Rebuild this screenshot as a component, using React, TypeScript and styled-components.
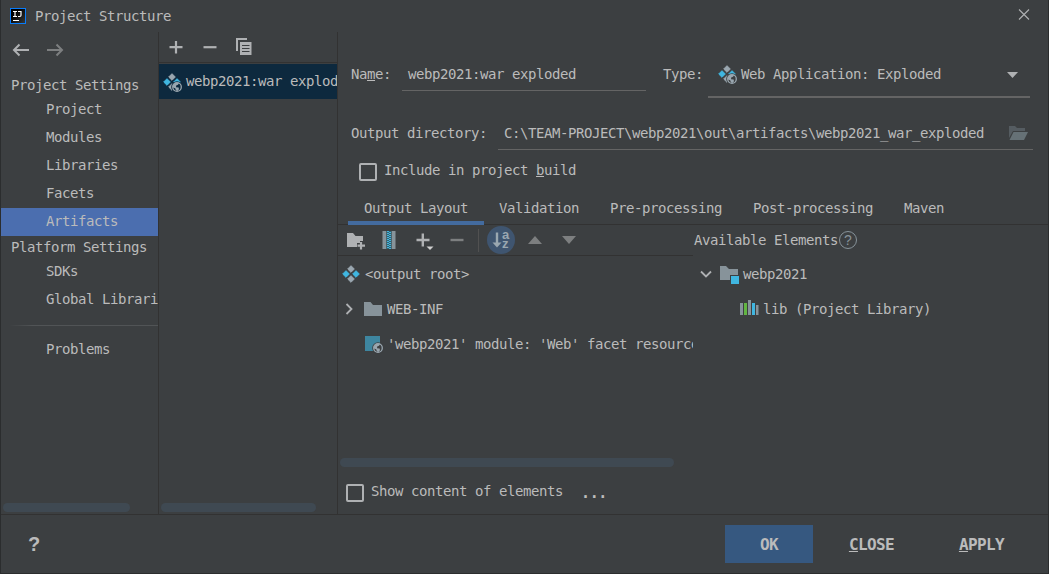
import React from "react";
import styled, { createGlobalStyle } from "styled-components";

const c = {
  bg: "#3c3f41",
  line: "#323232",
  text: "#bbbbbb",
  icon: "#afb1b3",
  dim: "#7d7f80",
  steel: "#87939a",
  grey: "#9aa7b0",
  blue: "#40b6e0",
  thumb: "#3f4952",
  select: "#0d293e",
  accent: "#4b6eaf",
};

const Global = createGlobalStyle`
  * { box-sizing: border-box; }
  body {
    margin: 0;
    background: ${c.bg};
    color: ${c.text};
    font-family: "DejaVu Sans Mono", "Liberation Mono", monospace;
    font-size: 14px;
    letter-spacing: -0.428px;
    white-space: pre;
    overflow: hidden;
  }
  svg { display: block; flex: none; }
`;

const Window = styled.div`
  width: 1049px;
  height: 574px;
  display: flex;
  flex-direction: column;
  border: solid #2b2d2e;
  border-width: 0 1px 1px 1px;
`;

const TitleBar = styled.header`
  height: 32px;
  display: flex;
  align-items: center;
  padding: 0 18px 0 9px;
  line-height: 32px;
  svg + span { margin-left: 8px; flex: 1; }
`;

const Body = styled.div`
  flex: 1;
  min-height: 0;
  display: flex;
  border-bottom: 1px solid ${c.line};
`;

const Sidebar = styled.nav`
  width: 158px;
  flex: none;
  display: flex;
  flex-direction: column;
  border-right: 1px solid ${c.line};
  overflow: hidden;
`;

const NavArrows = styled.div`
  height: 42px;
  display: flex;
  gap: 15px;
  padding: 8px 0 0 9px;
`;

const Section = styled.div`
  height: 22px;
  line-height: 23px;
  padding-left: 10px;
`;

const NavItem = styled.div<{ $active?: boolean }>`
  height: 28px;
  line-height: 27px;
  padding-left: 45px;
  background: ${(p) => (p.$active ? c.accent : "transparent")};
`;

const Divider = styled.div`
  height: 1px;
  margin: 11px 0 10px 8px;
  background: linear-gradient(to right, ${c.bg}, #515456 24px);
`;

const Thumb = styled.div<{ $w: number }>`
  width: ${(p) => p.$w}px;
  height: 9px;
  margin: auto 0 2px 2px;
  border-radius: 5px;
  background: ${c.thumb};
`;

const ArtifactList = styled.section`
  width: 179px;
  flex: none;
  display: flex;
  flex-direction: column;
  border-right: 1px solid ${c.line};
  overflow: hidden;
`;

const ListToolbar = styled.div`
  height: 31px;
  display: flex;
  gap: 14px;
  padding: 5px 0 0 7px;
  border-bottom: 1px solid ${c.line};
`;

const ListItem = styled.div`
  height: 35px;
  margin-top: 1px;
  display: flex;
  align-items: center;
  gap: 4px;
  padding-left: 3px;
  background: ${c.select};
  line-height: 33px;
`;

const Main = styled.main`
  flex: 1;
  min-width: 0;
  display: flex;
  flex-direction: column;
`;

const FormRow = styled.div<{ $top: number }>`
  display: flex;
  margin-top: ${(p) => p.$top}px;
  padding-left: 13px;
  line-height: 32px;
`;

const Label = styled.label<{ $w: number; $pad?: number }>`
  width: ${(p) => p.$w}px;
  padding-left: ${(p) => p.$pad ?? 0}px;
  flex: none;
`;

const Field = styled.div<{ $w: number }>`
  width: ${(p) => p.$w}px;
  height: 33px;
  display: flex;
  align-items: center;
  justify-content: space-between;
  padding: 0 5px 0 6px;
  border-bottom: 1px solid #646464;
`;

const Select = styled.div`
  width: 322px;
  height: 40px;
  display: flex;
  padding: 0 11px 0 9px;
  border-bottom: 2px solid #646464;
  svg { margin-top: 6px; }
  span { flex: 1; margin-left: 4px; }
`;

const CheckRow = styled.div<{ $pad: string }>`
  display: flex;
  padding: ${(p) => p.$pad};
  line-height: 19px;
`;

const Box = styled.span`
  width: 18px;
  height: 18px;
  margin: 2px 7px 0 0;
  border: 2px solid ${c.icon};
  border-radius: 2px;
`;

const Mnemonic = styled.span`
  text-decoration: underline;
  text-decoration-thickness: 1px;
  text-underline-offset: 1px;
  text-decoration-skip-ink: none;
`;

const Tabs = styled.div`
  height: 34px;
  margin-top: 10px;
  display: flex;
  padding-left: 10px;
  border-bottom: 1px solid ${c.line};
`;

const Tab = styled.div<{ $active?: boolean }>`
  height: 34px;
  line-height: 34px;
  padding: 0 ${(p) => (p.$active ? 16 : 15)}px 0 16px;
  margin-right: ${(p) => (p.$active ? -1 : 0)}px;
  box-shadow: ${(p) => (p.$active ? "inset 0 -4px 0 #436b9f" : "none")};
`;

const Split = styled.div`
  flex: 1;
  min-height: 0;
  display: flex;
`;

const Pane = styled.div`
  width: 355px;
  display: flex;
  flex-direction: column;
  overflow: hidden;
`;

const LayoutToolbar = styled.div`
  height: 31px;
  display: flex;
  align-items: center;
  gap: 14px;
  padding-left: 8px;
  border-bottom: 1px solid ${c.line};
`;

const ToolSeparator = styled.span`
  width: 1px;
  height: 23px;
  margin: 0 -6px 0 -4px;
  background: #515151;
`;

const SortToggle = styled.span`
  width: 28px;
  height: 28px;
  margin-right: -4px;
  display: grid;
  grid-template-columns: 10px 8px;
  align-items: center;
  justify-content: center;
  border-radius: 50%;
  background: #3f5570;
  color: ${c.grey};
  font: bold 13px/9px "Liberation Sans", sans-serif;
  letter-spacing: 0;
  white-space: normal;
  span { margin-top: -3px; }
`;

const PaneHeader = styled.div`
  height: 31px;
  display: flex;
  align-items: center;
  padding: 0 0 1px 1px;
`;

const HelpBadge = styled.span`
  width: 18px;
  height: 18px;
  margin-left: 1px;
  border: 1.5px solid ${c.steel};
  border-radius: 50%;
  color: ${c.steel};
  font: 14px/16px "Liberation Sans", sans-serif;
  letter-spacing: 0;
  text-align: center;
`;

const Tree = styled.div`
  padding-top: 1px;
`;

const TreeRow = styled.div<{ $indent: number; $gap?: number }>`
  height: 35px;
  display: flex;
  align-items: center;
  gap: ${(p) => p.$gap ?? 4}px;
  padding-left: ${(p) => p.$indent}px;
  line-height: 32px;
  svg, span { margin-top: -2px; }
`;

const More = styled.span`
  margin-left: 18px;
  font-weight: bold;
  font-size: 15px;
  line-height: 22px;
`;

const Footer = styled.footer`
  height: 58px;
  display: flex;
  align-items: center;
  padding: 0 15px 0 27px;
`;

const HelpMark = styled.span`
  flex: 1;
  font: bold 20px/30px "Liberation Sans", sans-serif;
`;

const Button = styled.button<{ $w: number; $primary?: boolean }>`
  width: ${(p) => p.$w}px;
  height: 38px;
  padding: 0;
  border: 0;
  background: ${(p) => (p.$primary ? "#365880" : "transparent")};
  color: ${c.text};
  font: bold 16px "DejaVu Sans Mono", monospace;
  letter-spacing: -0.6px;
`;

const Svg = ({ w = 20, h = 20, children }: { w?: number; h?: number; children: React.ReactNode }) => (
  <svg width={w} height={h} viewBox={`0 0 ${w} ${h}`} fill="none">
    {children}
  </svg>
);

const Globe = ({ x, y, bg }: { x: number; y: number; bg: string }) => (
  <g transform={`translate(${x} ${y})`}>
    <circle r="5.8" fill={bg} />
    <circle r="4.3" stroke={c.grey} strokeWidth="1.3" />
    <path d="M-4.4-1.2 -1.8-3.9 2-4 1-2.2-.8-1.4-1 .2 1.600 .4 2 2.200 .2 4.200-1.200 3-1.800 1.200-4 .4Z" fill={c.grey} />
  </g>
);

const Diamonds = () => (
  <g strokeWidth="1" strokeLinejoin="round">
    <path d="M10 1.700l3.300 3.300L10 8.300 6.700 5zM10 11.700l3.300 3.300-3.300 3.300L6.700 15z" fill={c.grey} stroke={c.grey} />
    <path d="M5 6.700l3.300 3.300L5 13.300 1.700 10zM15 6.700l3.300 3.300-3.300 3.300-3.300-3.300z" fill={c.blue} stroke={c.blue} />
  </g>
);

const ArtifactIcon = () => <Svg><Diamonds /></Svg>;
const WarIcon = ({ bg = c.bg }: { bg?: string }) => (
  <Svg><Diamonds /><Globe x={15} y={15} bg={bg} /></Svg>
);

const AppLogo = () => (
  <Svg w={17} h={17}>
    <defs>
      <linearGradient id="logo" x1="0" y1="0" x2="1" y2="1">
        <stop offset="0.3" stopColor="#000" />
        <stop offset="1" stopColor="#3a3a3a" />
      </linearGradient>
    </defs>
    <rect x=".5" y=".5" width="15" height="15" fill="url(#logo)" stroke="#087cfa" />
    <path d="M3 3.500h4M5 3.500v5M3 8.500h4M8 3.500h3v3.800q0 1.200-1.200 1.200H8M3 12.500h6" stroke="#fff" strokeWidth="1.2" />
  </Svg>
);

const BackIcon = ({ flip }: { flip?: boolean }) => (
  <Svg>
    <path
      d={flip ? "M2 10h15M11.5 4.5 17 10l-5.5 5.5" : "M19 10H4M9.5 4.5 4 10l5.5 5.5"}
      stroke={flip ? c.dim : c.icon}
      strokeWidth="2"
    />
  </Svg>
);

const CopyIcon = () => (
  <Svg>
    <path d="M2 1h11v2H4v11H2z" fill={c.icon} />
    <path d="M6 5h11.500v13H6z" fill={c.icon} />
    <path d="M8 8.500h7.500M8 11.500h7.500M8 14.500h7.500" stroke={c.bg} />
  </Svg>
);

const OpenFolderIcon = () => (
  <Svg>
    <path d="M1 3h6l2 2h8v3H5L1 15z" fill="#555c61" />
    <path d="M5.500 9H20l-4 8H1.500z" fill="#667176" />
  </Svg>
);

const FolderIcon = () => (
  <Svg><path d="M1 3h6.500l2.500 3h9v11H1z" fill={c.steel} /></Svg>
);

const ModuleFolderIcon = () => (
  <Svg>
    <path d="M1 2h6l3 3h9v6h-8v5H1z" fill={c.steel} />
    <path d="M12 12h8v8h-8z" fill={c.blue} />
  </Svg>
);

const Chevron = ({ open }: { open?: boolean }) => (
  <Svg w={12} h={20}>
    <path d={open ? "M1 7.500 6 12.500 11 7.500" : "M2.500 5 7.500 10l-5 5"} stroke={c.icon} strokeWidth="1.8" />
  </Svg>
);

export default function App() {
  return (
    <>
      <Global />
      <Window>
        <TitleBar>
          <AppLogo />
          <span>Project Structure</span>
          <Svg w={12} h={16}>
            <path d="M1 1.500 11 11.500M11 1.500 1 11.500" stroke={c.icon} strokeWidth="1.1" />
          </Svg>
        </TitleBar>
        <Body>
          <Sidebar>
            <NavArrows><BackIcon /><BackIcon flip /></NavArrows>
            <Section>Project Settings</Section>
            <NavItem>Project</NavItem>
            <NavItem>Modules</NavItem>
            <NavItem>Libraries</NavItem>
            <NavItem>Facets</NavItem>
            <NavItem $active>Artifacts</NavItem>
            <Section>Platform Settings</Section>
            <NavItem>SDKs</NavItem>
            <NavItem>Global Libraries</NavItem>
            <Divider />
            <NavItem>Problems</NavItem>
            <Thumb $w={127} />
          </Sidebar>
          <ArtifactList>
            <ListToolbar>
              <Svg><path d="M10 4v12.500M3.500 10.200h13" stroke={c.icon} strokeWidth="2.2" /></Svg>
              <Svg><path d="M3.500 10.200h13" stroke={c.icon} strokeWidth="2.2" /></Svg>
              <CopyIcon />
            </ListToolbar>
            <ListItem><WarIcon bg={c.select} /><span>webp2021:war exploded</span></ListItem>
            <Thumb $w={155} />
          </ArtifactList>
          <Main>
            <FormRow $top={26}>
              <Label $w={51}>Na<Mnemonic>m</Mnemonic>e:</Label>
              <Field $w={244}>webp2021:war exploded</Field>
              <Label $w={62} $pad={17}>Type:</Label>
              <Select>
                <WarIcon />
                <span>Web Application: Exploded</span>
                <Svg w={14}><path d="M2 8h11l-5.500 6z" fill={c.icon} /></Svg>
              </Select>
            </FormRow>
            <FormRow $top={19}>
              <Label $w={147}>Output directory:</Label>
              <Field $w={535}>
                <span>C:\TEAM-PROJECT\webp2021\out\artifacts\webp2021_war_exploded</span>
                <OpenFolderIcon />
              </Field>
            </FormRow>
            <CheckRow $pad="11px 0 0 21px">
              <Box />
              <span>Include in project <Mnemonic>b</Mnemonic>uild</span>
            </CheckRow>
            <Tabs>
              <Tab $active>Output Layout</Tab>
              <Tab>Validation</Tab>
              <Tab>Pre-processing</Tab>
              <Tab>Post-processing</Tab>
              <Tab>Maven</Tab>
            </Tabs>
            <Split>
              <Pane>
                <LayoutToolbar>
                  <Svg>
                    <path d="M1 3h6l2.500 3H17v5h-3v2h-3v4H1z" fill={c.icon} />
                    <path d="M15 12v7.500M11.500 15.700h7.500" stroke={c.icon} strokeWidth="2.200" />
                  </Svg>
                  <Svg>
                    <path d="M2.500 1h4v18h-4zM11.500 1h4v18h-4z" fill={c.steel} />
                    <path d="M6.500 1h5v18h-5z" fill="#35606f" />
                    <path d="M8 1v18M10 2v17" stroke={c.blue} strokeWidth="2" strokeDasharray="1 1" />
                  </Svg>
                  <Svg>
                    <path d="M8.800 3.500v13M2.500 10h13" stroke={c.icon} strokeWidth="2.400" />
                    <path d="M12.500 16.500h7l-3.500 3.500z" fill="#d0d0d0" />
                  </Svg>
                  <Svg><path d="M2.500 10h13" stroke={c.dim} strokeWidth="2.400" /></Svg>
                  <ToolSeparator />
                  <SortToggle>
                    <Svg w={10} h={18}>
                      <path d="M5 1.500v11" stroke={c.grey} strokeWidth="2.400" />
                      <path d="M.5 11.500h9L5 16.500z" fill={c.grey} />
                    </Svg>
                    <span>a z</span>
                  </SortToggle>
                  <Svg><path d="M3 14h14l-7-8z" fill={c.dim} /></Svg>
                  <Svg><path d="M3 6h14l-7 8z" fill={c.dim} /></Svg>
                </LayoutToolbar>
                <Tree>
                  <TreeRow $indent={3}><ArtifactIcon /><span>&lt;output root&gt;</span></TreeRow>
                  <TreeRow $indent={6}>
                    <Chevron />
                    <TreeRow $indent={3}><FolderIcon /><span>WEB-INF</span></TreeRow>
                  </TreeRow>
                  <TreeRow $indent={26} $gap={3}>
                    <Svg>
                      <path d="M1 2h15v15H1z" fill="#3e86a0" />
                      <Globe x={14} y={14} bg={c.bg} />
                    </Svg>
                    <span>'webp2021' module: 'Web' facet resources</span>
                  </TreeRow>
                </Tree>
                <Thumb $w={334} />
                <CheckRow $pad="13px 0 10px 8px">
                  <Box />
                  <span>Show content of elements</span>
                  <More>...</More>
                </CheckRow>
              </Pane>
              <Pane>
                <PaneHeader>Available Elements<HelpBadge>?</HelpBadge></PaneHeader>
                <Tree>
                  <TreeRow $indent={7} $gap={7}>
                    <Chevron open />
                    <TreeRow $indent={0} $gap={4}><ModuleFolderIcon /><span>webp2021</span></TreeRow>
                  </TreeRow>
                  <TreeRow $indent={46}>
                    <Svg>
                      <path d="M1 4h3v12H1zM9 1h3v15H9zM17 6h2.500v10H17z" fill={c.steel} />
                      <path d="M5 4h3v12H5z" fill="#62b543" />
                      <path d="M13 4h3v12h-3z" fill={c.blue} />
                    </Svg>
                    <span>lib (Project Library)</span>
                  </TreeRow>
                </Tree>
              </Pane>
            </Split>
          </Main>
        </Body>
        <Footer>
          <HelpMark>?</HelpMark>
          <Button $w={88} $primary>OK</Button>
          <Button $w={117}><Mnemonic>C</Mnemonic>LOSE</Button>
          <Button $w={103}><Mnemonic>A</Mnemonic>PPLY</Button>
        </Footer>
      </Window>
    </>
  );
}
